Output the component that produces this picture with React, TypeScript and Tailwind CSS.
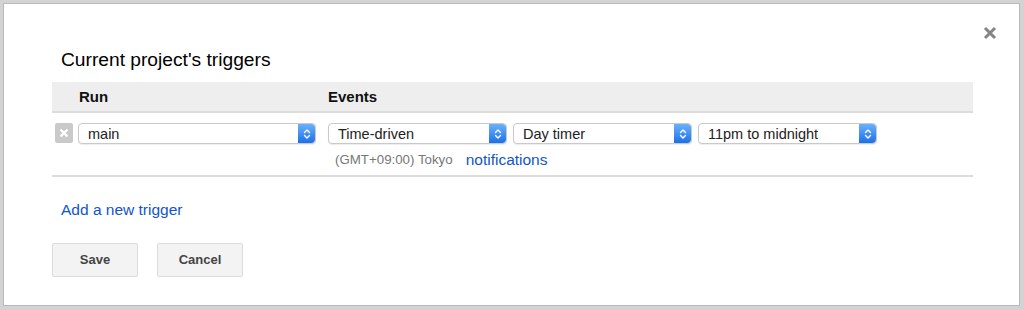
import React from "react";

const font = { fontFamily: '"Liberation Sans", Arial, Helvetica, sans-serif' };

function Stepper() {
  return (
    <div className="flex h-full w-[17px] shrink-0 items-center justify-center rounded-r-[4px] bg-gradient-to-b from-[#69b1fc] to-[#1a6fe9]">
      <svg width="8" height="12" viewBox="0 0 8 12" fill="none">
        <path d="M1.5 4.5 L4 2 L6.5 4.5" stroke="white" strokeWidth="1.4" strokeLinecap="round" strokeLinejoin="round" />
        <path d="M1.5 7.5 L4 10 L6.5 7.5" stroke="white" strokeWidth="1.4" strokeLinecap="round" strokeLinejoin="round" />
      </svg>
    </div>
  );
}

function MacSelect({ value, width }: { value: string; width: string }) {
  return (
    <div className={`flex h-[21px] ${width} items-stretch rounded-[4px] border border-[#c9c9c9] bg-white shadow-[0_1px_1px_rgba(0,0,0,0.08)]`}>
      <div className="flex flex-1 items-center pl-[9px] pt-[2px] text-[14.5px] leading-none text-[#222]">{value}</div>
      <Stepper />
    </div>
  );
}

export default function App() {
  return (
    <div className="h-[310px] w-[1024px] overflow-hidden bg-[#d3d3d3] pb-[4px] pl-[3px] pr-[4px] pt-[3px]" style={font}>
      <div className="relative h-[303px] w-[1017px] border border-[#b9b9b9] bg-white pl-[48px] pr-[46px] pt-[45px]">
        <button className="absolute right-[22px] top-[22px] text-[#888]" aria-label="Close">
          <svg width="14" height="14" viewBox="0 0 14 14">
            <path d="M2 2 L12 12 M12 2 L2 12" stroke="#858585" strokeWidth="3" />
          </svg>
        </button>

        <h2 className="pl-[9px] text-[19.2px] leading-[22px] text-black">Current project's triggers</h2>

        <div className="mt-[11px] grid h-[31px] grid-cols-[276px_1fr] items-center border-b-2 border-[#dcdcdc] bg-[#eeeeee] pt-[2px] text-[15px] font-bold text-[#111]">
          <div className="pl-[27px]">Run</div>
          <div>Events</div>
        </div>

        <div className="grid grid-cols-[276px_1fr] pt-[10px]">
          <div className="flex items-start gap-[5px] pl-[3px]">
            <div className="flex h-[20px] w-[18px] items-center justify-center rounded-[2px] bg-[#c9c9c9]">
              <svg width="10" height="10" viewBox="0 0 10 10">
                <path d="M1.5 1.5 L8.5 8.5 M8.5 1.5 L1.5 8.5" stroke="white" strokeWidth="2.4" />
              </svg>
            </div>
            <MacSelect value="main" width="w-[238px]" />
          </div>
          <div>
            <div className="flex gap-[6px]">
              <MacSelect value="Time-driven" width="w-[179px]" />
              <MacSelect value="Day timer" width="w-[179px]" />
              <MacSelect value="11pm to midnight" width="w-[179px]" />
            </div>
            <div className="mt-[7px] flex h-[18px] items-center pl-[7px]">
              <span className="text-[13.3px] text-[#777]">(GMT+09:00) Tokyo</span>
              <a className="ml-[13px] text-[15.5px] text-[#1155cc]" href="#">notifications</a>
            </div>
          </div>
        </div>

        <div className="mt-[6px] h-[2px] bg-[#dcdcdc]" />

        <div className="mt-[23px] flex h-[20px] items-center pl-[9px]">
          <a className="text-[15.5px] text-[#1155cc]" href="#">Add a new trigger</a>
        </div>

        <div className="mt-[23px] flex gap-[19px]">
          <button className="h-[34px] w-[86px] rounded-[2px] border border-[#dcdcdc] bg-[#f3f3f3] text-[13px] font-bold text-[#444]">Save</button>
          <button className="h-[34px] w-[86px] rounded-[2px] border border-[#dcdcdc] bg-[#f3f3f3] text-[13px] font-bold text-[#444]">Cancel</button>
        </div>
      </div>
    </div>
  );
}
